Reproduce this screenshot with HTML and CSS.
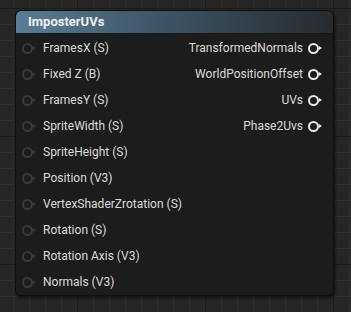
FILE: index.html
```html
<!DOCTYPE html>
<html lang="en">
<head>
    <meta charset="UTF-8">
    <title>ImposterUVs</title>
    <link rel="stylesheet" href="styles.css">
</head>
<body>
    <div class="node">
        <div class="node-header">ImposterUVs</div>
        <div class="node-body">
            <div class="pins inputs">
                <div class="pin"><span class="dot"></span>FramesX (S)</div>
                <div class="pin"><span class="dot"></span>Fixed Z (B)</div>
                <div class="pin"><span class="dot"></span>FramesY (S)</div>
                <div class="pin"><span class="dot"></span>SpriteWidth (S)</div>
                <div class="pin"><span class="dot"></span>SpriteHeight (S)</div>
                <div class="pin"><span class="dot"></span>Position (V3)</div>
                <div class="pin"><span class="dot"></span>VertexShaderZrotation (S)</div>
                <div class="pin"><span class="dot"></span>Rotation (S)</div>
                <div class="pin"><span class="dot"></span>Rotation Axis (V3)</div>
                <div class="pin"><span class="dot"></span>Normals (V3)</div>
            </div>
            <div class="pins outputs">
                <div class="pin">TransformedNormals<span class="dot"></span></div>
                <div class="pin">WorldPositionOffset<span class="dot"></span></div>
                <div class="pin">UVs<span class="dot"></span></div>
                <div class="pin">Phase2Uvs<span class="dot"></span></div>
            </div>
        </div>
    </div>
</body>
</html>
```

FILE: styles.css
```css
body {
    margin: 0;
    width: 351px;
    height: 312px;
    overflow: hidden;
    font-family: Roboto, 'Liberation Sans', sans-serif;
    background-color: #262626;
    background-image:
        linear-gradient(to right, #1b1b1b 1px, transparent 1px),
        linear-gradient(to bottom, #1b1b1b 1px, transparent 1px),
        linear-gradient(to right, #303030 1px, transparent 1px),
        linear-gradient(to bottom, #303030 1px, transparent 1px);
    background-size: 128px 128px, 128px 128px, 16px 16px, 16px 16px;
    background-position: 77px 0, 0 8px, 13px 0, 0 8px;
    padding: 10px 0 0 15px;
    box-sizing: border-box;
}

.node {
    width: 319px;
    height: 286px;
    background-color: #1b1c1b;
    border-radius: 6px;
    border: 1px solid #0e0e0e;
    box-sizing: border-box;
    box-shadow: 1px 2px 3px rgba(0, 0, 0, 0.6);
    overflow: hidden;
}

.node-header {
    height: 22px;
    line-height: 22px;
    padding-left: 12px;
    font-size: 13px;
    font-weight: bold;
    color: #f0f0f0;
    background: linear-gradient(to right, #5a7d95 0%, #3e5566 45%, #262b2f 100%);
    border-bottom: 1px solid #15181a;
    border-radius: 5px 5px 0 0;
}

.node-body {
    display: flex;
    justify-content: space-between;
    padding-top: 1px;
}

.pin {
    height: 26px;
    display: flex;
    align-items: center;
    font-size: 12px;
    color: #dcdcdc;
}

.inputs .pin {
    padding-left: 6px;
}

.outputs .pin {
    justify-content: flex-end;
    padding-right: 10px;
}

.dot {
    position: relative;
    width: 7px;
    height: 7px;
    border-radius: 50%;
    border: 2px solid #3a3a3a;
    margin-right: 10px;
}

.dot::after {
    content: "";
    position: absolute;
    left: 9px;
    top: 1px;
    border-left: 3px solid #3a3a3a;
    border-top: 2.5px solid transparent;
    border-bottom: 2.5px solid transparent;
}

.outputs .dot {
    border-color: #e8e8e8;
    margin-right: 4px;
    margin-left: 5px;
}

.outputs .dot::after {
    border-left-color: #e8e8e8;
}
```
